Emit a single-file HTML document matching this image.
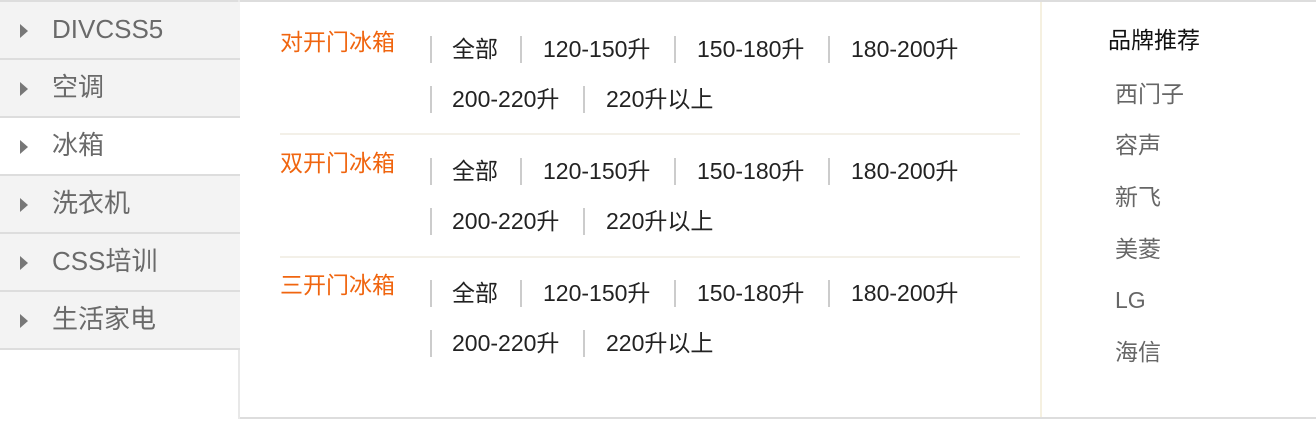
<!DOCTYPE html>
<html><head><meta charset="utf-8"><style>
*{margin:0;padding:0;box-sizing:border-box}
body{width:1316px;height:434px;background:#fff;position:relative;overflow:hidden;font-family:"Liberation Sans","Noto Sans CJK SC",sans-serif}
.a{position:absolute;white-space:nowrap}
.mi{position:absolute;left:0;width:240px;height:58px;background:#f3f3f3;border-bottom:2px solid #ddd}
.mi span{position:absolute;left:52px;top:11px;font-size:26px;color:#6a6a6a;line-height:32px}
.mi i{position:absolute;left:20px;top:22px;width:0;height:0;border-left:8px solid #777;border-top:7px solid transparent;border-bottom:7px solid transparent}
.cat{font-size:23px;color:#f0650f;left:280px;line-height:30px}
.l{font-size:23px;color:#222;line-height:30px}
.s{position:absolute;width:2px;height:27px;background:#ccc}
.h{position:absolute;left:280px;width:740px;height:2px;background:#f3f0e8}
.b{font-size:23px;color:#666;left:1115px;line-height:30px}
</style></head><body>
<div class="a" style="left:0;top:0;width:1316px;height:2px;background:#ddd"></div>
<div class="a" style="left:238px;top:417px;width:1078px;height:2px;background:#ddd"></div>
<div class="a" style="left:238px;top:0;width:2px;height:419px;background:#e8e8e8"></div>
<div class="mi" style="top:2px;height:58px"><i></i><span>DIVCSS5</span></div>
<div class="mi" style="top:60px;height:58px"><i></i><span>空调</span></div>
<div class="mi" style="top:118px;height:58px;background:#fff;width:240px"><i></i><span>冰箱</span></div>
<div class="mi" style="top:176px;height:58px"><i></i><span>洗衣机</span></div>
<div class="mi" style="top:234px;height:58px"><i></i><span>CSS培训</span></div>
<div class="mi" style="top:292px;height:58px"><i></i><span>生活家电</span></div>
<div class="a" style="left:1040px;top:2px;width:2px;height:415px;background:#f5f0e0"></div>

<div class="a cat" style="top:27px">对开门冰箱</div>
<div class="a cat" style="top:148px">双开门冰箱</div>
<div class="a cat" style="top:270px">三开门冰箱</div>
<div class="h" style="top:133px"></div>
<div class="h" style="top:256px"></div>

<div class="s" style="left:430px;top:36px"></div><div class="a l" style="left:452px;top:34px">全部</div>
<div class="s" style="left:520px;top:36px"></div><div class="a l" style="left:543px;top:34px">120-150升</div>
<div class="s" style="left:674px;top:36px"></div><div class="a l" style="left:697px;top:34px">150-180升</div>
<div class="s" style="left:828px;top:36px"></div><div class="a l" style="left:851px;top:34px">180-200升</div>
<div class="s" style="left:430px;top:86px"></div><div class="a l" style="left:452px;top:84px">200-220升</div>
<div class="s" style="left:583px;top:86px"></div><div class="a l" style="left:606px;top:84px">220升以上</div>

<div class="s" style="left:430px;top:158px"></div><div class="a l" style="left:452px;top:156px">全部</div>
<div class="s" style="left:520px;top:158px"></div><div class="a l" style="left:543px;top:156px">120-150升</div>
<div class="s" style="left:674px;top:158px"></div><div class="a l" style="left:697px;top:156px">150-180升</div>
<div class="s" style="left:828px;top:158px"></div><div class="a l" style="left:851px;top:156px">180-200升</div>
<div class="s" style="left:430px;top:208px"></div><div class="a l" style="left:452px;top:206px">200-220升</div>
<div class="s" style="left:583px;top:208px"></div><div class="a l" style="left:606px;top:206px">220升以上</div>

<div class="s" style="left:430px;top:280px"></div><div class="a l" style="left:452px;top:278px">全部</div>
<div class="s" style="left:520px;top:280px"></div><div class="a l" style="left:543px;top:278px">120-150升</div>
<div class="s" style="left:674px;top:280px"></div><div class="a l" style="left:697px;top:278px">150-180升</div>
<div class="s" style="left:828px;top:280px"></div><div class="a l" style="left:851px;top:278px">180-200升</div>
<div class="s" style="left:430px;top:330px"></div><div class="a l" style="left:452px;top:328px">200-220升</div>
<div class="s" style="left:583px;top:330px"></div><div class="a l" style="left:606px;top:328px">220升以上</div>

<div class="a" style="left:1108px;top:25px;font-size:23px;color:#111;line-height:30px">品牌推荐</div>
<div class="a b" style="top:79px">西门子</div>
<div class="a b" style="top:130px">容声</div>
<div class="a b" style="top:182px">新飞</div>
<div class="a b" style="top:234px">美菱</div>
<div class="a b" style="top:285px">LG</div>
<div class="a b" style="top:337px">海信</div>
</body></html>
